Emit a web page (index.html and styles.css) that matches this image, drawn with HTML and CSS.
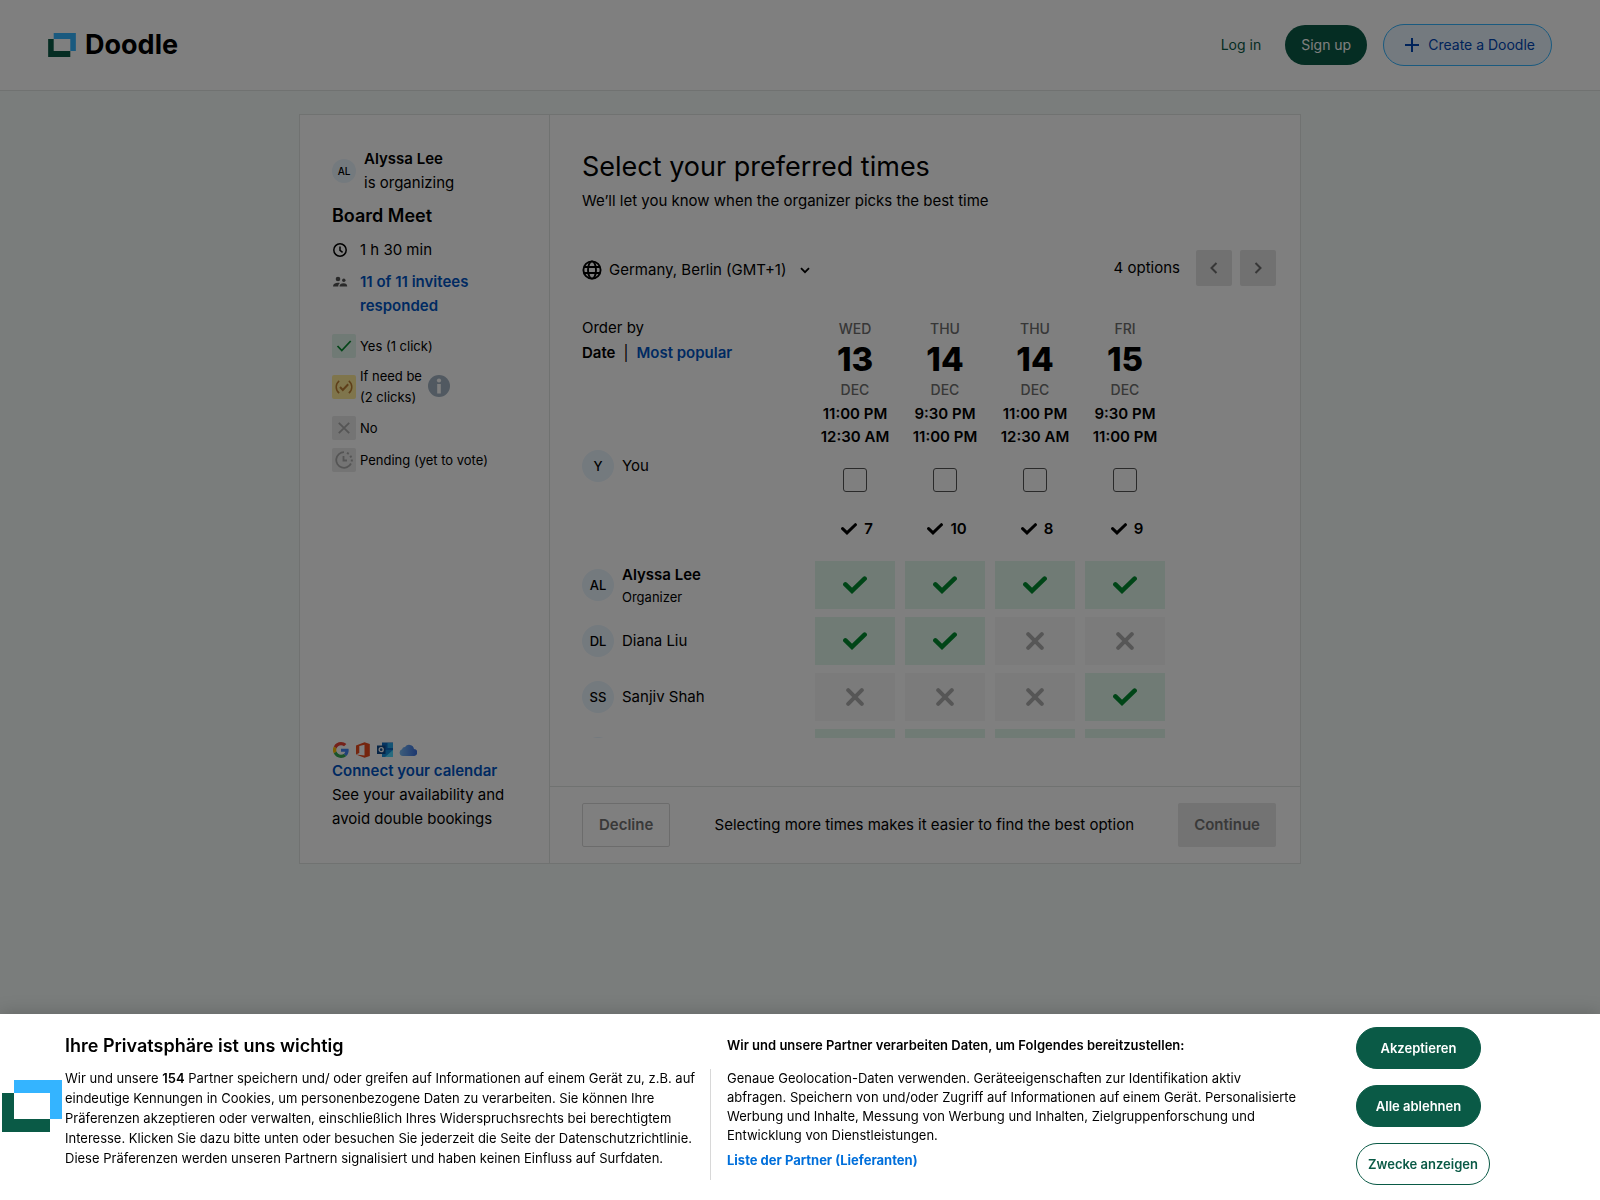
FILE: index.html
```html
<!DOCTYPE html>
<html lang="en">
<head>
<meta charset="utf-8">
<meta name="viewport" content="width=device-width, initial-scale=1">
<title>Board Meet - Doodle</title>
<link rel="stylesheet" href="styles.css">
</head>
<body>
<svg class="sprite" aria-hidden="true">
  <symbol id="logo" viewBox="0 0 60 52">
    <path d="M12 0h48v39H48V13H12z" fill="#34b4ff"/>
    <path d="M0 13h12v26h36v13H0z" fill="#0a5a46"/>
  </symbol>
  <symbol id="check" viewBox="0 0 24 18">
    <path d="M2.4 8.4 9 14.8 21.6 2.6" fill="none" stroke="currentColor" stroke-width="4.6" stroke-linecap="round"/>
  </symbol>
  <symbol id="cross" viewBox="0 0 18 18">
    <path d="M2.2 2.2l13.6 13.6M15.8 2.2 2.2 15.8" fill="none" stroke="currentColor" stroke-width="4" stroke-linecap="round"/>
  </symbol>
</svg>

<header class="topbar">
  <a class="brand" href="#"><svg class="brand-mark"><use href="#logo"/></svg><span>Doodle</span></a>
  <nav class="topnav">
    <a class="login" href="#">Log in</a>
    <button class="pill pill-solid" type="button">Sign up</button>
    <button class="pill pill-create" type="button">
      <svg width="14" height="14" viewBox="0 0 14 14"><path d="M7 0v14M0 7h14" stroke="currentColor" stroke-width="2"/></svg>
      Create a Doodle
    </button>
  </nav>
</header>

<main class="poll">
  <aside class="side">
    <div class="organizer">
      <span class="avatar avatar-small">AL</span>
      <p><strong>Alyssa Lee</strong><br>is organizing</p>
    </div>
    <h2 class="poll-name">Board Meet</h2>
    <p class="fact">
      <svg width="16" height="16" viewBox="0 0 16 16" fill="none" stroke="currentColor" stroke-width="1.5"><circle cx="8" cy="8" r="6.2"/><path d="M8 4.4V8.300l2.600 2"/></svg>
      <span>1 h 30 min</span>
    </p>
    <p class="fact">
      <svg class="people" width="16" height="16" viewBox="0 0 16 16" fill="currentColor"><circle cx="6" cy="5" r="2.300"/><circle cx="11.800" cy="6.200" r="1.700"/><path d="M1 12.500c0-2.600 2.200-3.700 5-3.700.8 0 1.400.1 2 .3-1.200.8-1.700 1.900-1.700 3.400z"/><path d="M7.500 12.500c0-2.300 1.700-3.300 4-3.300s3.700 1 3.700 3.300z"/></svg>
      <a href="#">11 of 11 invitees responded</a>
    </p>
    <ul class="legend">
      <li><span class="swatch swatch-yes"><svg width="16" height="12" viewBox="0 0 16 12"><path d="M1.500 6 5.800 10.500 14.700 1" fill="none" stroke="currentColor" stroke-width="1.800"/></svg></span>Yes (1 click)</li>
      <li><span class="swatch swatch-maybe"><svg width="18" height="14" viewBox="0 0 18 14" fill="none" stroke="currentColor"><path d="M4.200.8C.2 4 .2 10 4.200 13.200M13.800.8c4 3.200 4 9.200 0 12.400" stroke-width="1.500"/><path d="M5 7l2.800 3L13.200 4.200" stroke-width="2"/></svg></span><span>If need be<br>(2 clicks)</span>
        <svg class="info" width="22" height="22" viewBox="0 0 22 22"><circle cx="11" cy="11" r="11" fill="#a3b3c2"/><circle cx="11" cy="5.500" r="2.100" fill="#fff"/><path d="M9.200 9h3.600v9.500H9.200z" fill="#fff"/></svg></li>
      <li><span class="swatch swatch-no"><svg width="12" height="12" viewBox="0 0 12 12"><path d="M.8.8l10.400 10.400M11.200.8.8 11.200" stroke="currentColor" stroke-width="1.800"/></svg></span>No</li>
      <li><span class="swatch swatch-no"><svg width="18" height="18" viewBox="0 0 18 18" fill="none" stroke="currentColor" stroke-width="1.800"><path d="M9 1.200A7.800 7.800 0 1 0 16 12.500"/><path d="M8.500 5v4.500H12"/><path d="M12 1.800l1.800 1M15.300 4.800l1 1.800M16.800 8.500v2" stroke-width="2"/></svg></span>Pending (yet to vote)</li>
    </ul>
    <div class="connect">
      <div class="providers">
        <svg width="16" height="16" viewBox="0 0 48 48"><path fill="#ea4335" d="M24 9.500c3.500 0 6.700 1.200 9.200 3.600l6.900-6.900C35.900 2.400 30.500 0 24 0 14.600 0 6.500 5.400 2.600 13.200l8 6.200C12.400 13.700 17.700 9.500 24 9.500z"/><path fill="#4285f4" d="M47 24.600c0-1.600-.2-3.100-.4-4.600H24v9h12.900c-.6 3-2.300 5.500-4.800 7.200l7.700 6C44.400 38 47 32 47 24.600z"/><path fill="#fbbc05" d="M10.500 28.600a14.500 14.500 0 0 1 0-9.200l-8-6.200a24 24 0 0 0 0 21.600z"/><path fill="#34a853" d="M24 48c6.500 0 11.900-2.100 15.900-5.800l-7.700-6c-2.200 1.500-4.900 2.300-8.200 2.300-6.300 0-11.600-4.200-13.500-9.900l-8 6.200C6.500 42.600 14.600 48 24 48z"/></svg>
        <svg width="16" height="16" viewBox="0 0 16 16"><path fill="#eb4a1c" d="M1 3.500 9.500.3 14.800 2v12l-5.300 1.700L1 12.500l8.500 1V2.800L4.300 4v7L1 12.500z"/></svg>
        <svg width="16" height="16" viewBox="0 0 16 16"><path fill="#0a6ac4" d="M5 .5h11v9H5z"/><path fill="#28a8ea" d="M10.500 1H16v5h-5.500z"/><path fill="#1490df" d="M5 8l11 0v7H5z"/><path fill="#50d9ff" d="M16 8v7H8z"/><path fill="#0f4a8c" d="M0 3.500h8.500v8.500H0z"/><circle cx="4.200" cy="7.700" r="2" fill="none" stroke="#fff" stroke-width="1.300"/></svg>
        <svg width="18" height="12" viewBox="0 0 18 12"><defs><linearGradient id="sky"><stop offset="0" stop-color="#7cbcf5"/><stop offset="1" stop-color="#3a6fe0"/></linearGradient></defs><path fill="url(#sky)" d="M3.800 12A3.500 3.500 0 0 1 3 5.200 3 3 0 0 1 6 3 5 5 0 0 1 15 5a3.500 3.500 0 0 1-.5 7z"/></svg>
      </div>
      <a href="#">Connect your calendar</a>
      <p>See your availability and avoid double bookings</p>
    </div>
  </aside>

  <section class="content">
    <div class="times">
      <h1>Select your preferred times</h1>
      <p class="subtitle">We’ll let you know when the organizer picks the best time</p>
      <div class="toolbar">
        <label class="zone">
          <svg width="20" height="20" viewBox="0 0 20 20" fill="none" stroke="currentColor" stroke-width="1.900"><circle cx="10" cy="10" r="8.600"/><ellipse cx="10" cy="10" rx="4" ry="8.600"/><path d="M2 7h16M2 13h16"/></svg>
          <select aria-label="Time zone"><option>Germany, Berlin (GMT+1)</option></select>
          <svg width="10" height="7" viewBox="0 0 10 7"><path d="M1 1.200l4 4 4-4" fill="none" stroke="currentColor" stroke-width="1.800"/></svg>
        </label>
        <div class="pager">
          <span>4 options</span>
          <button type="button" disabled aria-label="Previous"><svg width="8" height="12" viewBox="0 0 8 12"><path d="M6.500 1l-5 5 5 5" fill="none" stroke="currentColor" stroke-width="2"/></svg></button>
          <button type="button" disabled aria-label="Next"><svg width="8" height="12" viewBox="0 0 8 12"><path d="M1.500 1l5 5-5 5" fill="none" stroke="currentColor" stroke-width="2"/></svg></button>
        </div>
      </div>

      <div class="grid-scroll">
        <table class="grid">
          <thead>
            <tr>
              <td class="order">Order by<br><strong>Date</strong><span class="bar">|</span><a href="#">Most popular</a></td>
              <th scope="col"><span class="muted">WED</span><span class="day">13</span><span class="muted">DEC</span><span class="hour">11:00 PM</span><span class="hour">12:30 AM</span></th>
              <th scope="col"><span class="muted">THU</span><span class="day">14</span><span class="muted">DEC</span><span class="hour">9:30 PM</span><span class="hour">11:00 PM</span></th>
              <th scope="col"><span class="muted">THU</span><span class="day">14</span><span class="muted">DEC</span><span class="hour">11:00 PM</span><span class="hour">12:30 AM</span></th>
              <th scope="col"><span class="muted">FRI</span><span class="day">15</span><span class="muted">DEC</span><span class="hour">9:30 PM</span><span class="hour">11:00 PM</span></th>
            </tr>
          </thead>
          <tbody>
            <tr class="you">
              <th scope="row"><div class="person"><span class="avatar">Y</span>You</div></th>
              <td><input type="checkbox" aria-label="Wed 13 Dec, 11:00 PM"></td>
              <td><input type="checkbox" aria-label="Thu 14 Dec, 9:30 PM"></td>
              <td><input type="checkbox" aria-label="Thu 14 Dec, 11:00 PM"></td>
              <td><input type="checkbox" aria-label="Fri 15 Dec, 9:30 PM"></td>
            </tr>
            <tr class="totals">
              <th></th>
              <td><div><svg><use href="#check"/></svg>7</div></td>
              <td><div><svg><use href="#check"/></svg>10</div></td>
              <td><div><svg><use href="#check"/></svg>8</div></td>
              <td><div><svg><use href="#check"/></svg>9</div></td>
            </tr>
            <tr class="votes">
              <th scope="row"><div class="person"><span class="avatar">AL</span><span><strong>Alyssa Lee</strong><small>Organizer</small></span></div></th>
              <td><div class="vote yes"><svg><use href="#check"/></svg></div></td>
              <td><div class="vote yes"><svg><use href="#check"/></svg></div></td>
              <td><div class="vote yes"><svg><use href="#check"/></svg></div></td>
              <td><div class="vote yes"><svg><use href="#check"/></svg></div></td>
            </tr>
            <tr class="votes">
              <th scope="row"><div class="person"><span class="avatar">DL</span>Diana Liu</div></th>
              <td><div class="vote yes"><svg><use href="#check"/></svg></div></td>
              <td><div class="vote yes"><svg><use href="#check"/></svg></div></td>
              <td><div class="vote no"><svg><use href="#cross"/></svg></div></td>
              <td><div class="vote no"><svg><use href="#cross"/></svg></div></td>
            </tr>
            <tr class="votes">
              <th scope="row"><div class="person"><span class="avatar">SS</span>Sanjiv Shah</div></th>
              <td><div class="vote no"><svg><use href="#cross"/></svg></div></td>
              <td><div class="vote no"><svg><use href="#cross"/></svg></div></td>
              <td><div class="vote no"><svg><use href="#cross"/></svg></div></td>
              <td><div class="vote yes"><svg><use href="#check"/></svg></div></td>
            </tr>
            <tr class="votes">
              <th scope="row"><div class="person"><span class="avatar"></span></div></th>
              <td><div class="vote yes"></div></td>
              <td><div class="vote yes"></div></td>
              <td><div class="vote yes"></div></td>
              <td><div class="vote yes"></div></td>
            </tr>
          </tbody>
        </table>
      </div>
    </div>
    <footer class="actions">
      <button class="decline" type="button">Decline</button>
      <span>Selecting more times makes it easier to find the best option</span>
      <button class="continue" type="button" disabled>Continue</button>
    </footer>
  </section>
</main>

<div class="overlay"></div>

<section class="consent" lang="de" role="dialog" aria-label="Ihre Privatsphäre ist uns wichtig">
  <svg class="consent-logo"><use href="#logo"/></svg>
  <div class="consent-policy">
    <h2>Ihre Privatsphäre ist uns wichtig</h2>
    <p>Wir und unsere <strong>154</strong> Partner speichern und/ oder greifen auf Informationen auf einem Gerät zu, z.B. auf<br>eindeutige Kennungen in Cookies, um personenbezogene Daten zu verarbeiten. Sie können Ihre<br>Präferenzen akzeptieren oder verwalten, einschließlich Ihres Widerspruchsrechts bei berechtigtem<br>Interesse. Klicken Sie dazu bitte unten oder besuchen Sie jederzeit die Seite der Datenschutzrichtlinie.<br>Diese Präferenzen werden unseren Partnern signalisiert und haben keinen Einfluss auf Surfdaten.</p>
  </div>
  <div class="consent-partners">
    <h3>Wir und unsere Partner verarbeiten Daten, um Folgendes bereitzustellen:</h3>
    <div class="consent-purposes">
      <p>Genaue Geolocation-Daten verwenden. Geräteeigenschaften zur Identifikation aktiv<br>abfragen. Speichern von und/oder Zugriff auf Informationen auf einem Gerät. Personalisierte<br>Werbung und Inhalte, Messung von Werbung und Inhalten, Zielgruppenforschung und<br>Entwicklung von Dienstleistungen.</p>
      <a href="#">Liste der Partner (Lieferanten)</a>
    </div>
  </div>
  <div class="consent-buttons">
    <button class="choice" type="button">Akzeptieren</button>
    <button class="choice" type="button">Alle ablehnen</button>
    <button class="choice choice-outline" type="button">Zwecke anzeigen</button>
  </div>
</section>
</body>
</html>
```
FILE: styles.css
```css
* { box-sizing: border-box; }

body {
  margin: 0;
  min-height: 100vh;
  background: #f5fbf8;
  color: #000;
  font: 15px/24px Inter, "Liberation Sans", sans-serif;
}

h1, h2, h3, p, ul { margin: 0; padding: 0; }
ul { list-style: none; }
a { color: #0054c4; font-weight: 600; text-decoration: none; }
strong { font-weight: 600; }
button { font: inherit; cursor: pointer; }
svg { flex: none; display: block; }
.sprite { position: absolute; width: 0; height: 0; }

/* Header */
.topbar {
  display: flex;
  justify-content: space-between;
  align-items: center;
  height: 91px;
  padding: 0 48px;
  background: #fff;
  border-bottom: 1px solid #e0e4e3;
}
.brand {
  display: flex;
  align-items: center;
  gap: 9px;
  color: #000;
  font-size: 27px;
  font-weight: 700;
}
.brand-mark { width: 28px; height: 24px; }
.topnav { display: flex; align-items: center; gap: 16px; font-size: 14px; }
.login { margin-right: 8px; color: #0a5a46; font-weight: 400; }
.pill {
  display: flex;
  align-items: center;
  gap: 9px;
  height: 40px;
  padding: 0 16px;
  border: 0;
  border-radius: 21px;
}
.pill-solid { background: #0a5a46; color: #fff; }
.pill-create {
  height: 42px;
  padding-left: 21px;
  background: #e8f5ff;
  border: 1px solid #34b4ff;
  color: #0046b4;
}

/* Poll card */
.poll {
  display: flex;
  width: calc(100% - 48px);
  max-width: 1002px;
  margin: 23px auto 0;
  background: #fff;
  border: 1px solid #e0e4e3;
}
.side {
  display: flex;
  flex-direction: column;
  flex: none;
  width: 250px;
  padding: 32px;
  border-right: 1px solid #e0e4e3;
}
.avatar {
  display: flex;
  flex: none;
  align-items: center;
  justify-content: center;
  width: 32px;
  height: 32px;
  border-radius: 50%;
  background: #e9f4fd;
  font-size: 13px;
  font-weight: 500;
}
.avatar-small { width: 24px; height: 24px; font-size: 10px; }
.organizer { display: flex; align-items: center; gap: 8px; }
.poll-name { margin: 7px 0 8px; font-size: 18px; line-height: 28px; font-weight: 600; }
.fact { display: flex; gap: 12px; margin-bottom: 8px; }
.fact svg { margin-top: 4px; }
.people { color: #555; }
.legend {
  display: flex;
  flex-direction: column;
  gap: 8px;
  margin-top: 8px;
  font-size: 13px;
  line-height: 21px;
}
.legend li { display: flex; align-items: center; gap: 4px; }
.swatch {
  display: flex;
  align-items: center;
  justify-content: center;
  width: 24px;
  height: 24px;
  border-radius: 2px;
}
.swatch-yes { background: #e0f4ea; color: #078a30; }
.swatch-maybe { background: #ffeb99; color: #bd7f35; }
.swatch-no { background: #e8e8e8; color: #ababab; }
.info { margin: 0 0 3px 2px; }
.connect { margin-top: auto; margin-right: -8px; }
.providers { display: flex; align-items: center; gap: 6px; padding: 0 0 1px 1px; }

/* Times */
.content { display: flex; flex: 1; flex-direction: column; min-width: 0; }
.times { flex: 1; padding: 32px 24px 48px 32px; }
h1 { font-size: 27px; line-height: 40px; font-weight: 400; }
.subtitle { margin-top: 2px; }
.toolbar {
  display: flex;
  align-items: center;
  justify-content: space-between;
  margin: 37px 0 26px;
}
.zone { display: flex; align-items: center; gap: 7px; padding-top: 4px; }
.zone select {
  appearance: none;
  margin-right: 6px;
  padding: 0;
  border: 0;
  background: none;
  color: inherit;
  font: inherit;
}
.pager { display: flex; align-items: center; gap: 8px; }
.pager span { margin-right: 8px; }
.pager button {
  display: flex;
  align-items: center;
  justify-content: center;
  width: 36px;
  height: 36px;
  padding: 0;
  border: 0;
  border-radius: 2px;
  background: #e3e3e3;
  color: #6e6e6e;
}

/* Voting grid */
.grid-scroll { max-height: 426px; overflow: hidden; }
.grid { border-collapse: collapse; table-layout: fixed; width: 593px; }
.grid th, .grid td { width: 90px; padding: 0 10px 0 0; font-weight: 400; text-align: center; vertical-align: top; }
.grid tr > :first-child { width: 233px; text-align: left; }
.grid .order { padding-top: 3px; line-height: 25px; }
.bar { margin: 0 8px; }
.grid thead th { padding-top: 1px; }
.grid thead th span { display: block; white-space: nowrap; }
.grid thead th .muted { color: #6e6e6e; font-size: 14px; font-weight: 500; line-height: 32px; }
.grid thead th .day { font-size: 33px; font-weight: 800; line-height: 29px; }
.grid thead th .hour { margin: 0 -8px; font-size: 15px; font-weight: 600; line-height: 23px; }
.grid thead th .hour:nth-of-type(4) { margin-top: -4px; }
.person { display: flex; align-items: center; gap: 8px; height: 48px; }
.person strong, .person small { display: block; }
.person small { font-size: 13px; line-height: 20px; }
.you { height: 60px; }
.you .person { height: 36px; }
.grid input {
  appearance: none;
  display: block;
  width: 24px;
  height: 24px;
  margin: 20px auto 0;
  border: 1px solid #555;
  border-radius: 3px;
}
.totals { height: 53px; }
.totals div {
  display: flex;
  align-items: center;
  justify-content: center;
  gap: 7px;
  padding-left: 4px;
  font-weight: 600;
}
.grid .totals td { padding-top: 9px; }
.totals svg { width: 16px; height: 12px; }
.votes { height: 56px; }
.vote { display: flex; align-items: center; justify-content: center; height: 48px; }
.vote svg { width: 24px; height: 18px; }
.yes { background: #e0f6ea; color: #008a2e; }
.no { background: #f6f6f6; color: #adadad; }

.actions {
  display: flex;
  align-items: center;
  justify-content: space-between;
  padding: 16px 24px 16px 32px;
  border-top: 1px solid #e0e4e3;
}
.actions button { height: 44px; padding: 0 16px; border-radius: 2px; font-weight: 600; }
.decline { border: 1px solid #d9d9d9; background: none; color: #737373; }
.continue { border: 0; background: #e6e6e6; color: #737373; }

/* Dimmed backdrop and consent banner */
.overlay { position: fixed; inset: 0; background: rgba(0, 0, 0, .5); }
.consent {
  position: fixed;
  right: 0;
  bottom: 0;
  left: 0;
  display: flex;
  padding: 13px 0 15px 2px;
  background: #fff;
  box-shadow: 0 0 18px rgba(0, 0, 0, .2);
  font-size: 13px;
  line-height: 20px;
  white-space: nowrap;
}
.consent-logo { align-self: center; width: 60px; height: 52px; margin-right: 3px; }
.consent-policy { flex: none; width: 645px; }
.consent h2 { margin: 5px 0 8px; font-size: 18px; line-height: 28px; font-weight: 600; }
.consent h3 { margin: 5px 0 11px 17px; font-size: 13px; line-height: 26px; font-weight: 600; }
.consent-partners { flex: none; width: 646px; }
.consent-purposes { height: 111px; padding-left: 16px; border-left: 1px solid #d8d8d8; line-height: 19px; }
.consent-purposes a { display: block; margin-top: 6px; color: #006fdb; font-weight: 700; }
.consent-buttons { display: flex; flex-direction: column; align-items: flex-start; gap: 16px; }
.choice {
  min-width: 125px;
  height: 42px;
  padding: 0 10px;
  border: 1px solid #0a5a46;
  border-radius: 21px;
  background: #0a5a46;
  color: #fff;
  font-weight: 600;
}
.choice-outline { padding: 0 11px; background: #fff; color: #0a5a46; }
```
